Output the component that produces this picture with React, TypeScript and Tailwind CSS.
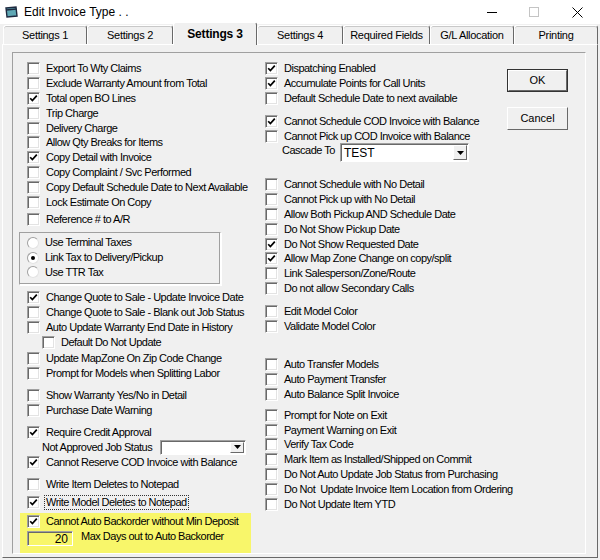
import React from "react";

const TABS = [
  { label: "Settings 1", w: "w-[84px]" },
  { label: "Settings 2", w: "w-[86px]" },
  { label: "Settings 3", w: "w-[84px]", active: true },
  { label: "Settings 4", w: "w-[86px]" },
  { label: "Required Fields", w: "w-[87px]" },
  { label: "G/L Allocation", w: "w-[84px]" },
  { label: "Printing", w: "w-[84px]" },
];

function Box({ checked }: { checked?: boolean }) {
  return (
    <span className="flex h-[13px] w-[13px] shrink-0 items-center justify-center border border-t-[#a0a0a0] border-l-[#a0a0a0] border-r-white border-b-white bg-white shadow-[inset_1px_1px_0_#696969,inset_-1px_-1px_0_#e3e3e3]">
      {checked && (
        <svg width="9" height="9" viewBox="0 0 9 9">
          <path d="M1.2 4.2 L3.4 6.6 L7.8 1.6" fill="none" stroke="#000" strokeWidth="1.7" />
        </svg>
      )}
    </span>
  );
}

function Cb({
  label,
  checked,
  focus,
  className = "",
}: {
  label: string;
  checked?: boolean;
  focus?: boolean;
  className?: string;
}) {
  return (
    <div className={`flex h-[14.8px] items-center gap-[6px] ${className}`}>
      <Box checked={checked} />
      <span
        className={`whitespace-pre leading-none ${focus ? "outline outline-1 outline-dotted outline-[#333] outline-offset-1" : ""}`}
      >
        {label}
      </span>
    </div>
  );
}

function Radio({ label, checked }: { label: string; checked?: boolean }) {
  return (
    <div className="flex h-[14.8px] items-center gap-[6px]">
      <span className="flex h-[12px] w-[12px] shrink-0 items-center justify-center rounded-full border border-t-[#a0a0a0] border-l-[#a0a0a0] border-r-[#e3e3e3] border-b-[#e3e3e3] bg-white">
        {checked && <span className="h-[4px] w-[4px] rounded-full bg-black" />}
      </span>
      <span className="whitespace-pre leading-none">{label}</span>
    </div>
  );
}

function Combo({ value, className = "", text = "" }: { value?: string; className?: string; text?: string }) {
  return (
    <div
      className={`flex items-stretch border border-t-[#a0a0a0] border-l-[#a0a0a0] border-r-white border-b-white bg-white shadow-[inset_1px_1px_0_#696969] ${className}`}
    >
      <span className={`flex flex-1 items-center pl-[3px] pt-[1px] leading-none ${text}`}>{value}</span>
      <span className="my-[1px] mr-[1px] flex w-[14px] items-center justify-center border border-t-white border-l-white border-r-[#696969] border-b-[#696969] bg-[#f0f0f0]">
        <svg width="7" height="4" viewBox="0 0 7 4">
          <path d="M0 0 H7 L3.5 4 Z" fill="#000" />
        </svg>
      </span>
    </div>
  );
}

function Button({ label, def }: { label: string; def?: boolean }) {
  return (
    <div
      className={`flex h-[23px] w-[61px] items-center justify-center bg-[#f0f0f0] ${def ? "border border-[#333]" : "border border-t-white border-l-white border-r-[#696969] border-b-[#696969]"}`}
    >
      <div
        className={`flex h-full w-full items-center justify-center ${def ? "border border-t-white border-l-white border-r-[#696969] border-b-[#696969]" : ""}`}
      >
        {label}
      </div>
    </div>
  );
}

export default function App() {
  return (
    <div className="relative h-[560px] w-[600px] overflow-hidden bg-[#f0f0f0] font-['Liberation_Sans',Arial,sans-serif] text-[11px] tracking-[-0.5px] text-black">
      {/* title bar */}
      <div className="flex h-[24px] items-center bg-white tracking-normal">
        <svg className="ml-[5px]" width="14" height="12" viewBox="0 0 14 12">
          <path d="M1 2 L11 1 L12 10 L2 11 Z" fill="#5fa8b5" stroke="#1e2a40" strokeWidth="1.4" />
          <path d="M1.2 4 L11.3 3" stroke="#1e2a40" strokeWidth="1.4" />
        </svg>
        <span className="ml-[5px] text-[12px]">Edit Invoice Type . .</span>
        <div className="ml-auto flex items-center">
          <span className="mr-[32px] block h-[1px] w-[10px] bg-black" />
          <span className="mr-[33px] block h-[10px] w-[10px] border border-[#c4c4c4]" />
          <svg className="mr-[17px]" width="11" height="11" viewBox="0 0 11 11">
            <path d="M0.5 0.5 L10.5 10.5 M10.5 0.5 L0.5 10.5" stroke="#000" strokeWidth="1" />
          </svg>
        </div>
      </div>

      {/* tab strip */}
      <div className="relative z-10 flex h-[20px] items-end pl-[3px]">
        {TABS.map((t) =>
          t.active ? (
            <div
              key={t.label}
              className={`${t.w} -mb-[1px] flex h-[23px] items-center justify-center rounded-t-[3px] border border-b-0 border-t-white border-l-white border-r-[#696969] bg-[#f0f0f0] text-[12px] font-bold tracking-[-0.2px]`}
            >
              {t.label}
            </div>
          ) : (
            <div
              key={t.label}
              className={`${t.w} flex h-[19px] items-center justify-center rounded-t-[3px] border border-b-0 border-t-white border-l-white border-r-[#696969] bg-[#f0f0f0] pt-[1px] tracking-[-0.3px] shadow-[inset_0_1px_0_#c8c8c8]`}
            >
              {t.label}
            </div>
          ),
        )}
      </div>

      {/* panel */}
      <div className="ml-[2px] h-[514px] w-[596px] border border-t-white border-l-white border-r-[#696969] border-b-[#696969] pl-[9px] pt-[7px]">
        <div className="flex h-[502px] w-[574px] border border-t-[#a0a0a0] border-l-[#a0a0a0] border-r-white border-b-white pl-[14px] pt-[8.6px]">
          {/* left column */}
          <div className="flex w-[238px] flex-col">
            <Cb label="Export To Wty Claims" />
            <Cb label="Exclude Warranty Amount from Total" />
            <Cb label="Total open BO Lines" checked />
            <Cb label="Trip Charge" />
            <Cb label="Delivery Charge" />
            <Cb label="Allow Qty Breaks for Items" />
            <Cb label="Copy Detail with Invoice" checked />
            <Cb label="Copy Complaint / Svc Performed" />
            <Cb label="Copy Default Schedule Date to Next Available" />
            <Cb label="Lock Estimate On Copy" />
            <Cb label="Reference # to A/R" className="mt-[3px]" />

            <div className="-ml-[8px] mt-[5px] h-[53px] w-[202px] border border-t-[#a0a0a0] border-l-[#a0a0a0] border-r-white border-b-white pl-[7px] pt-[2px] shadow-[inset_-1px_-1px_0_#a0a0a0,1px_1px_0_#fff]">
              <Radio label="Use Terminal Taxes" />
              <Radio label="Link Tax to Delivery/Pickup" checked />
              <Radio label="Use TTR Tax" />
            </div>

            <Cb label="Change Quote to Sale - Update Invoice Date" checked className="mt-[5px]" />
            <Cb label="Change Quote to Sale - Blank out Job Status" />
            <Cb label="Auto Update Warranty End Date in History" />
            <Cb label="Default Do Not Update" className="pl-[15px]" />
            <Cb label="Update MapZone On Zip Code Change" className="mt-[2px]" />
            <Cb label="Prompt for Models when Splitting Labor" />
            <Cb label="Show Warranty Yes/No in Detail" className="mt-[7px]" />
            <Cb label="Purchase Date Warning" />
            <Cb label="Require Credit Approval" checked className="mt-[7px]" />
            <div className="flex h-[15px] items-center pl-[15px]">
              <span className="w-[118px] whitespace-pre leading-none">Not Approved Job Status</span>
              <Combo className="h-[15px] w-[86px]" />
            </div>
            <Cb label="Cannot Reserve COD Invoice with Balance" checked className="mt-[1px]" />
            <Cb label="Write Item Deletes to Notepad" className="mt-[7px]" />
            <Cb label="Write Model Deletes to Notepad" checked focus className="mt-[3px]" />

            <div className="-ml-[7px] mt-[2.6px] h-[40px] w-[231px] bg-[#f8f66a] pl-[7px] pt-[1.6px]">
              <Cb label="Cannot Auto Backorder without Min Deposit" checked />
              <div className="mt-[2px] flex h-[15px] items-center gap-[8px]">
                <span className="flex h-[15px] w-[46px] items-center justify-end border border-t-[#a0a0a0] border-l-[#a0a0a0] border-r-white border-b-white pr-[4px] pt-[2px] text-[12px] leading-none tracking-normal shadow-[inset_1px_1px_0_#696969]">
                  20
                </span>
                <span className="-mt-[3px] whitespace-pre leading-none">Max Days out to Auto Backorder</span>
              </div>
            </div>
          </div>

          {/* right column */}
          <div className="flex w-[242px] flex-col">
            <Cb label="Dispatching Enabled" checked className="h-[14.5px]" />
            <Cb label="Accumulate Points for Call Units" checked className="h-[14.5px]" />
            <Cb label="Default Schedule Date to next available" className="h-[14.5px]" />
            <Cb label="Cannot Schedule COD Invoice with Balance" checked className="mt-[8px]" />
            <Cb label="Cannot Pick up COD Invoice with Balance" />
            <div className="flex h-[18px] items-center pl-[17px]">
              <span className="-mt-[4px] w-[58px] whitespace-pre leading-none">Cascade To</span>
              <Combo value="TEST" className="h-[19px] w-[129px]" text="text-[12px] tracking-normal" />
            </div>
            <Cb label="Cannot Schedule with No Detail" className="mt-[16px]" />
            <Cb label="Cannot Pick up with No Detail" />
            <Cb label="Allow Both Pickup AND Schedule Date" />
            <Cb label="Do Not Show Pickup Date" />
            <Cb label="Do Not Show Requested Date" checked />
            <Cb label="Allow Map Zone Change on copy/split" checked />
            <Cb label="Link Salesperson/Zone/Route" />
            <Cb label="Do not allow Secondary Calls" />
            <Cb label="Edit Model Color" className="mt-[8px]" />
            <Cb label="Validate Model Color" />
            <Cb label="Auto Transfer Models" className="mt-[24px]" />
            <Cb label="Auto Payment Transfer" />
            <Cb label="Auto Balance Split Invoice" />
            <Cb label="Prompt for Note on Exit" className="mt-[6px]" />
            <Cb label="Payment Warning on Exit" />
            <Cb label="Verify Tax Code" />
            <Cb label="Mark Item as Installed/Shipped on Commit" />
            <Cb label="Do Not Auto Update Job Status from Purchasing" />
            <Cb label="Do Not  Update Invoice Item Location from Ordering" />
            <Cb label="Do Not Update Item YTD" />
          </div>

          {/* buttons */}
          <div className="flex flex-col gap-[15px] pt-[7.4px] tracking-normal">
            <Button label="OK" def />
            <Button label="Cancel" />
          </div>
        </div>
      </div>
    </div>
  );
}
